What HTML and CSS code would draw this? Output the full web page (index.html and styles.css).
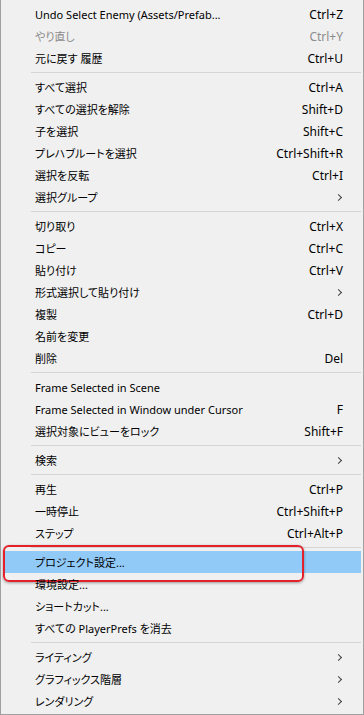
FILE: index.html
```html
<!DOCTYPE html>
<html lang="ja">
<head>
    <meta charset="UTF-8">
    <meta name="viewport" content="width=device-width, initial-scale=1.0">
    <title>Edit Menu</title>
    <link rel="stylesheet" href="styles.css">
</head>
<body>
    <div class="menu">
        <div class="item"><span class="label">Undo Select Enemy (Assets/Prefab...</span><span class="key">Ctrl+Z</span></div>
        <div class="item disabled"><span class="label">やり直し</span><span class="key">Ctrl+Y</span></div>
        <div class="item"><span class="label">元に戻す 履歴</span><span class="key">Ctrl+U</span></div>
        <div class="sep"></div>
        <div class="item"><span class="label">すべて選択</span><span class="key">Ctrl+A</span></div>
        <div class="item"><span class="label">すべての選択を解除</span><span class="key">Shift+D</span></div>
        <div class="item"><span class="label">子を選択</span><span class="key">Shift+C</span></div>
        <div class="item"><span class="label">プレハブルートを選択</span><span class="key">Ctrl+Shift+R</span></div>
        <div class="item"><span class="label">選択を反転</span><span class="key">Ctrl+I</span></div>
        <div class="item"><span class="label">選択グループ</span><span class="arrow"></span></div>
        <div class="sep"></div>
        <div class="item"><span class="label">切り取り</span><span class="key">Ctrl+X</span></div>
        <div class="item"><span class="label">コピー</span><span class="key">Ctrl+C</span></div>
        <div class="item"><span class="label">貼り付け</span><span class="key">Ctrl+V</span></div>
        <div class="item"><span class="label">形式選択して貼り付け</span><span class="arrow"></span></div>
        <div class="item"><span class="label">複製</span><span class="key">Ctrl+D</span></div>
        <div class="item"><span class="label">名前を変更</span></div>
        <div class="item"><span class="label">削除</span><span class="key">Del</span></div>
        <div class="sep"></div>
        <div class="item"><span class="label">Frame Selected in Scene</span></div>
        <div class="item"><span class="label">Frame Selected in Window under Cursor</span><span class="key">F</span></div>
        <div class="item"><span class="label">選択対象にビューをロック</span><span class="key">Shift+F</span></div>
        <div class="sep"></div>
        <div class="item"><span class="label">検索</span><span class="arrow"></span></div>
        <div class="sep"></div>
        <div class="item"><span class="label">再生</span><span class="key">Ctrl+P</span></div>
        <div class="item"><span class="label">一時停止</span><span class="key">Ctrl+Shift+P</span></div>
        <div class="item"><span class="label">ステップ</span><span class="key">Ctrl+Alt+P</span></div>
        <div class="sep"></div>
        <div class="item active"><span class="label">プロジェクト設定...</span></div>
        <div class="item"><span class="label">環境設定...</span></div>
        <div class="item"><span class="label">ショートカット...</span></div>
        <div class="item"><span class="label">すべての PlayerPrefs を消去</span></div>
        <div class="sep"></div>
        <div class="item"><span class="label">ライティング</span><span class="arrow"></span></div>
        <div class="item"><span class="label">グラフィックス階層</span><span class="arrow"></span></div>
        <div class="item"><span class="label">レンダリング</span><span class="arrow"></span></div>
    </div>
</body>
</html>
```

FILE: styles.css
```css
* {
    margin: 0;
    padding: 0;
    box-sizing: border-box;
}
body {
    font-family: "Noto Sans", "Noto Sans CJK JP", sans-serif;
    font-size: 12px;
    color: #000;
    background: #f0f0f0;
}
.menu {
    width: 364px;
    height: 715px;
    padding: 3px 2px 3px 2px;
    background: #f0f0f0;
    border-left: 1px solid #a0a0a0;
    border-right: 1px solid #a0a0a0;
    border-bottom: 1px solid #a0a0a0;
}
.item {
    position: relative;
    display: flex;
    align-items: center;
    height: 22px;
    padding: 0 18px 0 32px;
}
.label {
    flex: 1;
    font-size: 11px;
    white-space: nowrap;
    font-feature-settings: "palt";
}
.key {
    white-space: nowrap;
}
.disabled {
    color: #8c8c8c;
}
.arrow {
    width: 5px;
    height: 5px;
    margin-right: 2px;
    border-top: 1px solid #404040;
    border-right: 1px solid #404040;
    transform: rotate(45deg);
}
.sep {
    height: 7px;
    margin-left: 28px;
    padding-top: 3px;
}
.sep::before {
    content: "";
    display: block;
    height: 1px;
    background: #d5d5d5;
}
.active {
    background: #91c9f7;
}
.active::after {
    content: "";
    position: absolute;
    top: -6px;
    left: 0;
    width: 297px;
    height: 33px;
    border: 2px solid #e3212b;
    border-radius: 6px;
    box-shadow: 0 1px 3px rgba(0, 0, 0, 0.35);
}
```
